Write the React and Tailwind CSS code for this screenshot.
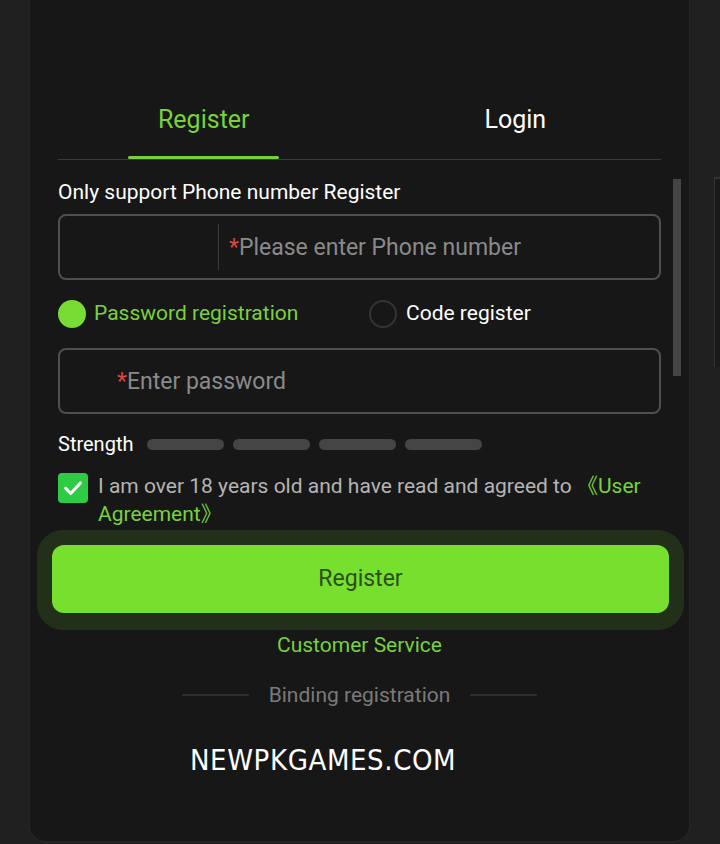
import React from 'react';

const font = "font-['Roboto','Noto_Sans_CJK_SC',sans-serif]";

const bars = [0, 1, 2, 3];

function Tab({ label, active, className }) {
  return (
    <div className={`flex h-[54px] flex-col items-center ${className}`}>
      <span className={`text-[25px] leading-[30px] ${active ? 'text-[#78d23c]' : 'text-white'}`}>{label}</span>
      {active && <div className="mt-auto h-[3px] w-[151px] rounded-full bg-[#74d13a]" />}
    </div>
  );
}

export default function App() {
  return (
    <div className={`flex min-h-[844px] bg-[#202020] ${font}`}>
      <main className="relative ml-[29px] mb-[2px] flex h-[842px] w-[661px] flex-col rounded-b-[16px] border-x border-b border-[#262626] bg-[#171717] px-[28px]">
        {/* tabs */}
        <div className="mt-[105px] grid grid-cols-2 border-b border-[#3a3a3a]">
          <Tab label="Register" active className="pr-[10px]" />
          <Tab label="Login" className="pl-[10px]" />
        </div>

        <p className="mt-[20px] text-[21px] leading-[24px] text-white">Only support Phone number Register</p>

        <div className="mt-[10px] flex h-[66px] items-center rounded-[8px] border-2 border-[#4f4f4f]">
          <div className="w-[158px]" />
          <div className="h-[46px] w-px bg-[#3a3a3a]" />
          <div className="pl-[10px] pt-[2px] text-[23px] text-[#8a8a8a]">
            <span className="text-[#d9493f]">*</span>Please enter Phone number
          </div>
        </div>

        <div className="mt-[19px] flex h-[30px] items-center">
          <label className="flex w-[311px] items-center gap-[8px]">
            <span className="h-[28px] w-[28px] rounded-full bg-[#78dc34]" />
            <span className="text-[21px] text-[#78d23c]">Password registration</span>
          </label>
          <label className="flex items-center gap-[9px]">
            <span className="h-[28px] w-[28px] rounded-full border-2 border-[#343434]" />
            <span className="text-[21px] text-white">Code register</span>
          </label>
        </div>

        <div className="mt-[19px] flex h-[66px] items-center rounded-[8px] border-2 border-[#4f4f4f] pl-[57px]">
          <div className="pt-[2px] text-[23px] text-[#8a8a8a]">
            <span className="text-[#d9493f]">*</span>Enter password
          </div>
        </div>

        <div className="mt-[18px] flex h-[24px] items-center">
          <span className="text-[20px] leading-[24px] text-white">Strength</span>
          <div className="ml-[14px] flex gap-[9px]">
            {bars.map((b) => (
              <div key={b} className="h-[11px] w-[77px] rounded-full bg-[#454545]" />
            ))}
          </div>
        </div>

        <div className="mt-[16px] flex items-start gap-[10px]">
          <span className="mt-px flex h-[30px] w-[30px] shrink-0 items-center justify-center rounded-[4px] bg-[#2ecb45]">
            <svg width="22" height="22" viewBox="0 0 24 24" fill="none" stroke="white" strokeWidth="3.4" strokeLinecap="round" strokeLinejoin="round">
              <polyline points="4 12.5 9.5 18 20 6.5" />
            </svg>
          </span>
          <p className="text-[21px] leading-[28px] text-[#b4b4b4]">
            I am over 18 years old and have read and agreed to <span className="text-[#78d23c]">《User Agreement》</span>
          </p>
        </div>

        <div className="mt-[2px] ml-[-21px] mr-[-23px] rounded-[26px] bg-[#233019] px-[15px] pt-[15px] pb-[17px]">
          <button className="flex h-[68px] w-full items-center justify-center rounded-[12px] bg-[#77e02e] text-[23px] text-[#2d4d1b]">
            Register
          </button>
        </div>

        <p className="mt-[3px] text-center text-[21px] leading-[24px] text-[#78d23c]">Customer Service</p>

        <div className="mt-[26px] flex h-[24px] items-center justify-center gap-[20px]">
          <div className="h-[2px] w-[67px] bg-[#2e2e2e]" />
          <span className="text-[21px] leading-[24px] text-[#7a7a7a]">Binding registration</span>
          <div className="h-[2px] w-[67px] bg-[#2e2e2e]" />
        </div>

        <div className="mt-[38px] pl-[132px] font-['DejaVu_Sans_Condensed','DejaVu_Sans',sans-serif] text-[29px] leading-[30px] tracking-[0.6px] text-white">
          NEWPKGAMES.COM
        </div>

        {/* scrollbar thumb */}
        <div className="absolute left-[643px] top-[179px] h-[197px] w-[8px] bg-[#444]" />
      </main>
      <div className="ml-[24px] mt-[177px] h-[190px] w-[6px] border-t-2 border-l border-[#333] bg-[#1a1a1a]" />
    </div>
  );
}
